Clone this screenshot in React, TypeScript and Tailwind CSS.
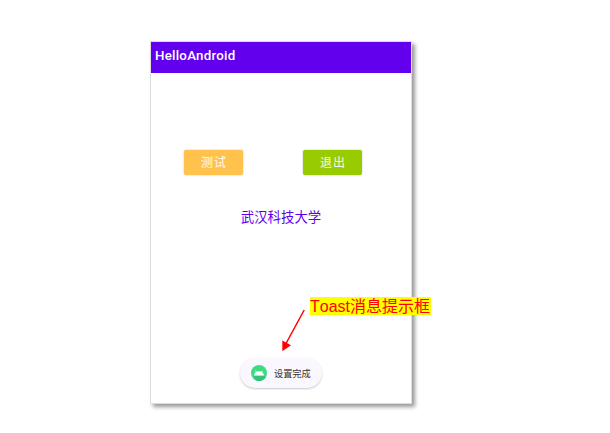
function AndroidIcon() {
  return (
    <svg className="h-4 w-4 shrink-0" viewBox="0 0 16 16">
      <circle cx="8" cy="8" r="8" fill="#3ddc84" />
      <path d="M3 10.9 13 10.9 15 12 A8 8 0 0 1 4.5 15.2Z" fill="#32c27a" />
      <path d="M3 10.5a5 5 0 0 1 2-3.5L4.2 5.7l.6-.3.9 1.4a5.6 5.6 0 0 1 4.6 0l.9-1.4.6.3-.8 1.3a5 5 0 0 1 2 3.5z" fill="#fff" />
      <circle cx="5.9" cy="8.9" r=".45" fill="#3ddc84" />
      <circle cx="10.1" cy="8.9" r=".45" fill="#3ddc84" />
    </svg>
  );
}

function ActionButton({ label, color }: { label: string; color: string }) {
  return (
    <button
      className={`h-[25px] w-[59px] rounded-[2px] pt-[2px] pl-px text-[12px] leading-[23px] tracking-[1px] text-white/90 shadow-[0_0_2px_rgba(0,0,0,0.25)] ${color}`}
    >
      {label}
    </button>
  );
}

export default function App() {
  return (
    <div className="relative h-[433px] w-[610px] overflow-hidden bg-white pt-[41px] pl-[150px] font-['Roboto','Noto_Sans_CJK_SC',sans-serif]">
      <main className="flex h-[363px] w-[262px] flex-col border border-[#dddddd] bg-white shadow-[3px_3px_4px_rgba(0,0,0,0.4)]">
        <header className="h-[31px] shrink-0 bg-[#6200ee] pl-1 text-[13.3px] leading-[27px] font-medium tracking-[0.25px] text-white">
          HelloAndroid
        </header>
        <div className="flex gap-[60px] pt-[77px] pl-[33px]">
          <ActionButton label="测试" color="bg-[#ffc34d]" />
          <ActionButton label="退出" color="bg-[#99cc00]" />
        </div>
        <p className="mt-[33px] text-center text-[13.4px] leading-5 text-[#6200ee]">武汉科技大学</p>
        <div className="mt-auto mb-[15px] ml-[89px] flex h-[30px] w-[82px] items-center gap-[7px] rounded-full bg-[#faf8fe] pl-[11px] text-[9.2px] whitespace-nowrap text-[#333333] shadow-[0_1px_2px_rgba(0,0,0,0.22)]">
          <AndroidIcon />
          <span className="pt-px">设置完成</span>
        </div>
      </main>
      <svg className="absolute top-[305px] left-[275px] h-[50px] w-[35px]" viewBox="0 0 35 50">
        <path d="M29.2 5 11 38.5" stroke="#ff0000" strokeWidth="1.5" />
        <path d="M7.3 46.2 7.3 35.5 16 40.2Z" fill="#ff0000" />
      </svg>
      <div className="absolute top-[297px] left-[310px] h-[18px] w-[121px] bg-[#ffff00] font-['Liberation_Sans','Noto_Sans_CJK_SC',sans-serif] text-[16px] leading-[19px] whitespace-nowrap text-[#ff0000] [font-kerning:none]">
        Toast消息提示框
      </div>
    </div>
  );
}
